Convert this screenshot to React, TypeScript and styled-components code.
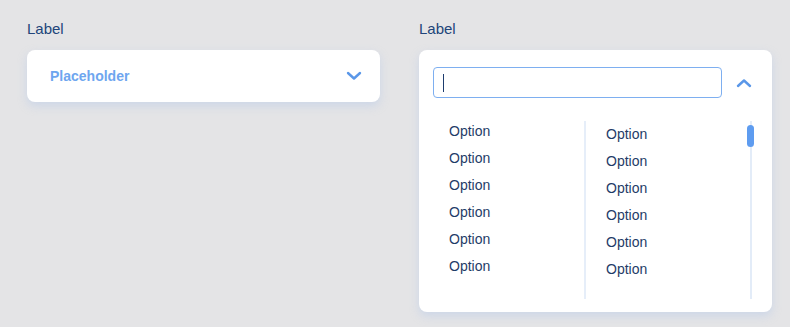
import React from "react";
import styled, { createGlobalStyle } from "styled-components";

const GlobalStyle = createGlobalStyle`
  body {
    margin: 0;
    background: #e4e4e6;
    font-family: "Liberation Sans", Arial, sans-serif;
  }
`;

const Page = styled.div`
  display: flex;
  gap: 39px;
  padding: 20px 0 0 27px;
  width: 790px;
  height: 327px;
  box-sizing: border-box;
`;

const Field = styled.div`
  width: 353px;
  display: flex;
  flex-direction: column;
  gap: 13px;
`;

const Label = styled.div`
  font-size: 15px;
  line-height: 17px;
  color: #21447a;
`;

const Card = styled.div`
  background: #fff;
  border-radius: 8px;
  box-shadow: 0 4px 10px rgba(160, 190, 235, 0.35);
`;

const Trigger = styled(Card)`
  height: 52px;
  display: flex;
  align-items: center;
  justify-content: space-between;
  padding: 0 18px 0 23px;
  box-sizing: border-box;
`;

const Placeholder = styled.span`
  font-size: 14px;
  font-weight: bold;
  color: #6ea6ef;
`;

const Panel = styled(Card)`
  height: 262px;
  padding: 17px 14px 0 14px;
  box-sizing: border-box;
`;

const SearchRow = styled.div`
  display: flex;
  align-items: center;
  gap: 14px;
`;

const SearchBox = styled.div`
  width: 289px;
  height: 31px;
  box-sizing: border-box;
  border: 1px solid #7eaff0;
  border-radius: 4px;
  display: flex;
  align-items: center;
  padding-left: 9px;
`;

const Caret = styled.span`
  width: 1px;
  height: 18px;
  background: #1d3c6e;
`;

const ListArea = styled.div`
  display: flex;
  margin-top: 20px;
  height: 181px;
`;

const Column = styled.div<{ $pad: number; $offset: number; $w: number }>`
  width: ${(p) => p.$w}px;
  padding-left: ${(p) => p.$pad}px;
  padding-top: ${(p) => p.$offset}px;
  box-sizing: border-box;
  display: flex;
  flex-direction: column;
`;

const Divider = styled.div`
  width: 2px;
  margin-top: 3px;
  background: #e6eef9;
`;

const Option = styled.div`
  font-size: 14px;
  line-height: 27px;
  height: 27px;
  color: #1f3c68;
`;

const Track = styled.div`
  position: relative;
  width: 2px;
  margin-top: 3px;
  margin-left: -1px;
  background: #e3ecf8;
`;

const Thumb = styled.div`
  position: absolute;
  left: -3px;
  top: 4px;
  width: 7px;
  height: 22px;
  border-radius: 4px;
  background: #5e9cf0;
`;

const Chevron = ({ up }: { up?: boolean }) => (
  <svg width="16" height="10" viewBox="0 0 16 10">
    <path
      d={up ? "M2 8 L8 2.5 L14 8" : "M2 2 L8 7.5 L14 2"}
      fill="none"
      stroke="#5a97e8"
      strokeWidth="2.4"
      strokeLinecap="round"
      strokeLinejoin="round"
    />
  </svg>
);

const options = Array.from({ length: 6 }, () => "Option");

export default function App() {
  return (
    <>
      <GlobalStyle />
      <Page>
        <Field>
          <Label>Label</Label>
          <Trigger>
            <Placeholder>Placeholder</Placeholder>
            <Chevron />
          </Trigger>
        </Field>
        <Field>
          <Label>Label</Label>
          <Panel>
            <SearchRow>
              <SearchBox>
                <Caret />
              </SearchBox>
              <Chevron up />
            </SearchRow>
            <ListArea>
              <Column $pad={16} $offset={0} $w={151}>
                {options.map((o, i) => (
                  <Option key={i}>{o}</Option>
                ))}
              </Column>
              <Divider />
              <Column $pad={20} $offset={3} $w={165}>
                {options.map((o, i) => (
                  <Option key={i}>{o}</Option>
                ))}
              </Column>
              <Track>
                <Thumb />
              </Track>
            </ListArea>
          </Panel>
        </Field>
      </Page>
    </>
  );
}
